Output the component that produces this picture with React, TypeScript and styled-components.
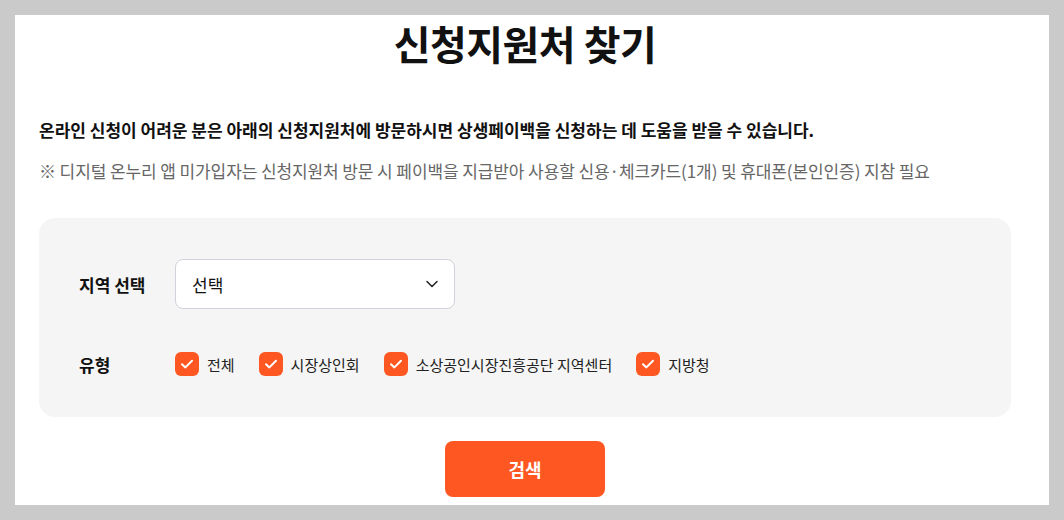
import styled, { createGlobalStyle } from "styled-components";
import { ChevronDown } from "lucide-react";

const GlobalStyle = createGlobalStyle`
  html, body {
    margin: 0;
    padding: 0;
    background: #cacaca;
    font-family: "Noto Sans CJK KR", "Noto Sans", sans-serif;
  }
`;

const Frame = styled.div`
  padding: 15px;
`;

const Sheet = styled.div`
  height: 490px;
  overflow: hidden;
  background: #ffffff;
  padding: 0 38px 0 24px;
  box-sizing: border-box;
`;

const Title = styled.h1`
  margin: 0;
  font-size: 40px;
  line-height: 56px;
  font-weight: 700;
  color: #111;
  text-align: center;
  letter-spacing: -0.5px;
`;

const Lead = styled.p`
  margin: 47px 0 0;
  font-size: 17px;
  line-height: 24px;
  font-weight: 700;
  color: #111;
`;

const Note = styled.p`
  margin: 17px 0 0;
  font-size: 17px;
  line-height: 24px;
  color: #666;
  letter-spacing: -0.1px;
`;

const Panel = styled.section`
  margin-top: 35px;
  background: #f5f5f5;
  border-radius: 16px;
  padding: 41px 40px 40px;
  display: flex;
  flex-direction: column;
  gap: 42px;
`;

const Row = styled.div<{ $height: number }>`
  display: flex;
  align-items: center;
  height: ${(p) => p.$height}px;
`;

const Label = styled.div`
  width: 96px;
  flex-shrink: 0;
  font-size: 17px;
  font-weight: 700;
  color: #111;
`;

const Select = styled.div`
  width: 280px;
  height: 50px;
  box-sizing: border-box;
  background: #fff;
  border: 1px solid #d2d2da;
  border-radius: 8px;
  display: flex;
  align-items: center;
  justify-content: space-between;
  padding: 0 12px 0 16px;
  font-size: 17px;
  color: #111;
`;

const Options = styled.div`
  display: flex;
  align-items: center;
  gap: 24px;
`;

const Option = styled.label`
  display: flex;
  align-items: center;
  gap: 8px;
  font-size: 15px;
  color: #222;
`;

const Box = styled.span`
  width: 24px;
  height: 24px;
  border-radius: 6px;
  background: #ff5722;
  display: flex;
  align-items: center;
  justify-content: center;
`;

const Actions = styled.div`
  display: flex;
  justify-content: center;
  margin-top: 24px;
`;

const SearchButton = styled.button`
  width: 160px;
  height: 56px;
  border: none;
  border-radius: 8px;
  background: #ff5722;
  color: #fff;
  font-family: inherit;
  font-size: 18px;
  font-weight: 700;
  cursor: pointer;
`;

const types = ["전체", "시장상인회", "소상공인시장진흥공단 지역센터", "지방청"];

function Check() {
  return (
    <svg width="16" height="16" viewBox="0 0 16 16" fill="none">
      <path
        d="M3 8.2 6.4 11.4 13 4.8"
        stroke="#fff"
        strokeWidth="2"
        strokeLinecap="round"
        strokeLinejoin="round"
      />
    </svg>
  );
}

export default function App() {
  return (
    <Frame>
      <GlobalStyle />
      <Sheet>
        <Title>신청지원처 찾기</Title>
        <Lead>
          온라인 신청이 어려운 분은 아래의 신청지원처에 방문하시면 상생페이백을 신청하는 데 도움을 받을 수 있습니다.
        </Lead>
        <Note>
          ※ 디지털 온누리 앱 미가입자는 신청지원처 방문 시 페이백을 지급받아 사용할 신용·체크카드(1개) 및 휴대폰(본인인증) 지참 필요
        </Note>
        <Panel>
          <Row $height={50}>
            <Label>지역 선택</Label>
            <Select>
              <span>선택</span>
              <ChevronDown size={20} strokeWidth={1.8} color="#222" />
            </Select>
          </Row>
          <Row $height={26}>
            <Label>유형</Label>
            <Options>
              {types.map((t) => (
                <Option key={t}>
                  <Box>
                    <Check />
                  </Box>
                  {t}
                </Option>
              ))}
            </Options>
          </Row>
        </Panel>
        <Actions>
          <SearchButton type="button">검색</SearchButton>
        </Actions>
      </Sheet>
    </Frame>
  );
}
